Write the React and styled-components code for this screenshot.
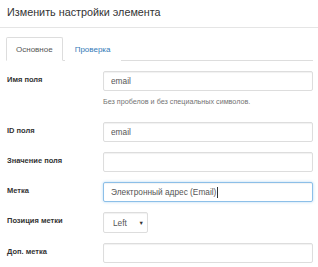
import React from "react";
import styled, { createGlobalStyle } from "styled-components";

const Global = createGlobalStyle`
  html, body { margin: 0; padding: 0; background: #fff; }
  body { font-family: "Liberation Sans", Arial, sans-serif; color: #333; }
  * { box-sizing: border-box; }
`;

const Modal = styled.div`
  width: 318px;
  height: 267px;
  overflow: hidden;
  background: #fff;
`;

const Header = styled.div`
  height: 28px;
  padding: 5px 7px 0;
  border-bottom: 1px solid #e5e5e5;
`;

const Title = styled.h4`
  margin: 0;
  font-size: 10.8px;
  font-weight: normal;
  line-height: 15px;
  color: #333;
`;

const Body = styled.div`
  padding: 9px 5px 0 6px;
`;

const Tabs = styled.ul`
  display: flex;
  list-style: none;
  margin: 0 0 10px;
  padding: 0;
  border-bottom: 1px solid #ddd;
  height: 24px;
`;

const Tab = styled.li`
  height: 24px;
  margin-bottom: -1px;
  padding: 0 9px;
  display: flex;
  align-items: center;
  font-size: 8px;
  border: 1px solid ${(p) => (p.$active ? "#ddd" : "transparent")};
  border-bottom-color: ${(p) => (p.$active ? "#fff" : "transparent")};
  border-radius: 2px 2px 0 0;
  background: #fff;
  color: ${(p) => (p.$active ? "#555" : "#337ab7")};
  margin-right: 2px;
`;

const Group = styled.div`
  display: grid;
  grid-template-columns: 97px 210px;
  align-items: start;
  margin-bottom: 10px;
`;

const Label = styled.label`
  font-size: 7.5px;
  font-weight: bold;
  color: #333;
  padding: 4px 0 0 1px;
  line-height: 10px;
`;

const Field = styled.div`
  position: relative;
  display: flex;
  flex-direction: column;
`;

const textStyle = `
  font-family: "Liberation Sans", Arial, sans-serif;
  font-size: 8.3px;
`;

const Input = styled.input`
  width: 210px;
  height: 20px;
  padding: 0 7px;
  ${textStyle}
  color: #555;
  background: #fff;
  border: 1px solid ${(p) => (p.$focus ? "#8cbfe8" : "#ddd")};
  border-radius: 2px;
  box-shadow: ${(p) =>
    p.$focus
      ? "inset 0 1px 1px rgba(0,0,0,.05), 0 0 3px rgba(102,175,233,.5)"
      : "inset 0 1px 1px rgba(0,0,0,.06)"};
  outline: none;
`;

/* transparent copy of the value that carries the text caret over the input */
const CaretMirror = styled.span`
  position: absolute;
  left: 8px;
  top: 0;
  height: 20px;
  display: flex;
  align-items: center;
  ${textStyle}
  color: transparent;
  white-space: pre;
  pointer-events: none;
  &::after {
    content: "";
    display: inline-block;
    width: 1px;
    height: 11px;
    margin-left: 1px;
    background: #333;
  }
`;

const Help = styled.span`
  display: block;
  margin: 6px 0 5px;
  font-size: 7.2px;
  line-height: 10px;
  color: #737373;
`;

const Select = styled.div`
  width: 45px;
  height: 21px;
  display: flex;
  align-items: center;
  justify-content: space-between;
  padding: 0 3px 0 9px;
  border: 1px solid #ddd;
  border-radius: 2px;
  font-size: 8.3px;
  color: #555;
  box-shadow: inset 0 1px 1px rgba(0,0,0,.06);
`;

const Arrow = styled.span`
  font-size: 5.5px;
  color: #333;
`;

const labelText = "Электронный адрес (Email)";

export default function App() {
  return (
    <Modal>
      <Global />
      <Header>
        <Title>Изменить настройки элемента</Title>
      </Header>
      <Body>
        <Tabs>
          <Tab $active>Основное</Tab>
          <Tab>Проверка</Tab>
        </Tabs>
        <Group>
          <Label>Имя поля</Label>
          <Field>
            <Input defaultValue="email" />
            <Help>Без пробелов и без специальных символов.</Help>
          </Field>
        </Group>
        <Group>
          <Label>ID поля</Label>
          <Field>
            <Input defaultValue="email" />
          </Field>
        </Group>
        <Group>
          <Label>Значение поля</Label>
          <Field>
            <Input defaultValue="" />
          </Field>
        </Group>
        <Group>
          <Label>Метка</Label>
          <Field>
            <Input $focus defaultValue={labelText} />
            <CaretMirror aria-hidden="true">{labelText}</CaretMirror>
          </Field>
        </Group>
        <Group>
          <Label>Позиция метки</Label>
          <Field>
            <Select>
              <span>Left</span>
              <Arrow>▼</Arrow>
            </Select>
          </Field>
        </Group>
        <Group>
          <Label>Доп. метка</Label>
          <Field>
            <Input defaultValue="" />
          </Field>
        </Group>
      </Body>
    </Modal>
  );
}
